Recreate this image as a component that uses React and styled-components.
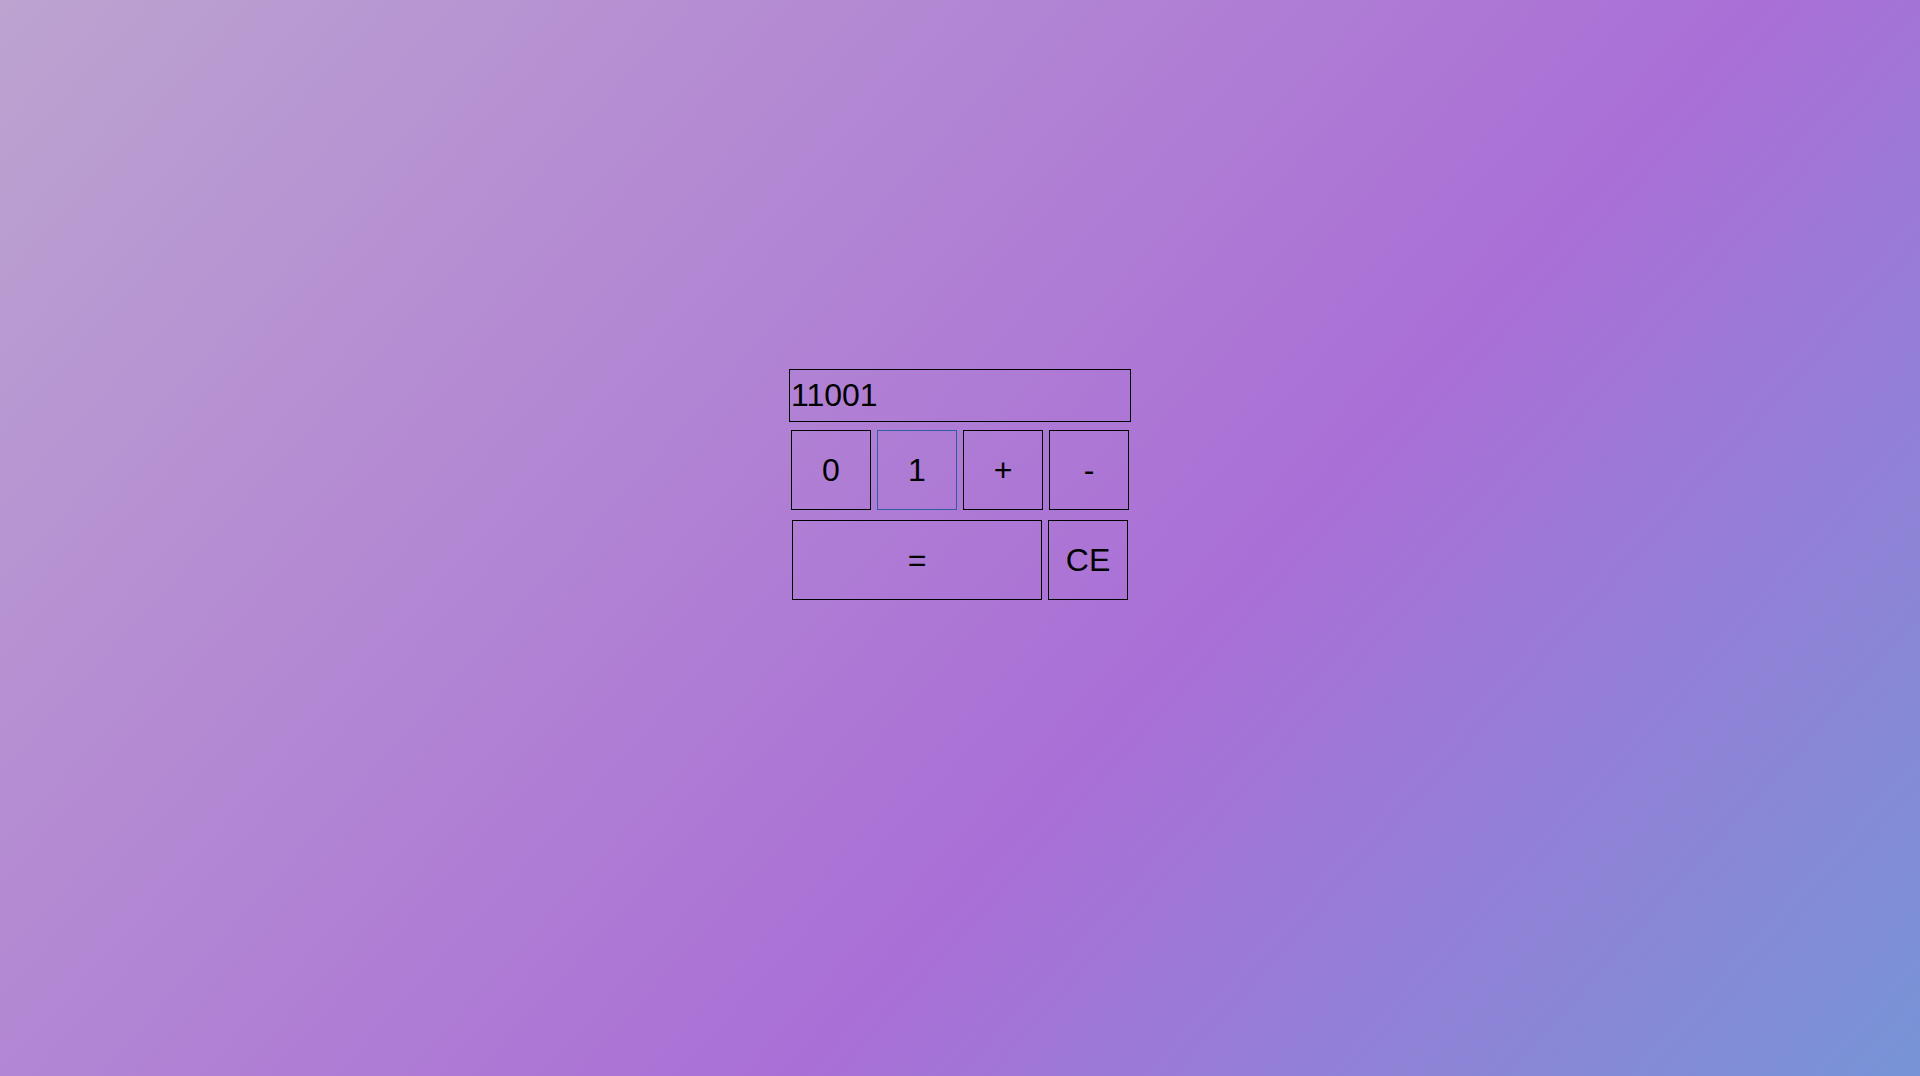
import styled, { createGlobalStyle } from "styled-components";

const GlobalStyle = createGlobalStyle`
  html, body {
    margin: 0;
    padding: 0;
    height: 100%;
  }
  body {
    font-family: "Liberation Sans", Arial, sans-serif;
  }
`;

const Page = styled.main`
  min-height: 100vh;
  box-sizing: border-box;
  background: linear-gradient(132deg, #bca3d0 0%, #aa6fd6 61%, #7794d7 100%);
  display: flex;
  flex-direction: column;
  align-items: center;
  padding-top: 369px;
`;

const Calculator = styled.div`
  display: flex;
  flex-direction: column;
  align-items: center;
`;

const Display = styled.input`
  width: 342px;
  height: 53px;
  box-sizing: border-box;
  border: 1px solid #000;
  background: transparent;
  padding: 0 1px;
  margin: 0;
  font-family: "Liberation Sans", Arial, sans-serif;
  font-size: 32px;
  color: #000;
  outline: none;
`;

const Row = styled.div`
  display: flex;
  gap: 6px;
  margin-top: ${(p) => p.$top}px;
`;

const Key = styled.button`
  width: ${(p) => p.$width || 80}px;
  height: 80px;
  box-sizing: border-box;
  margin: 0;
  padding: 0;
  border: 1px solid ${(p) => (p.$focused ? "#2c5fa3" : "#000")};
  background: transparent;
  color: #000;
  font-family: "Liberation Sans", Arial, sans-serif;
  font-size: 32px;
  cursor: pointer;
`;

function App() {
  return (
    <>
      <GlobalStyle />
      <Page>
        <Calculator>
          <Display type="text" value="11001" readOnly />
          <Row $top={8}>
            <Key>0</Key>
            <Key $focused>1</Key>
            <Key>+</Key>
            <Key>-</Key>
          </Row>
          <Row $top={10}>
            <Key $width={250}>=</Key>
            <Key>CE</Key>
          </Row>
        </Calculator>
      </Page>
    </>
  );
}

export default App;
